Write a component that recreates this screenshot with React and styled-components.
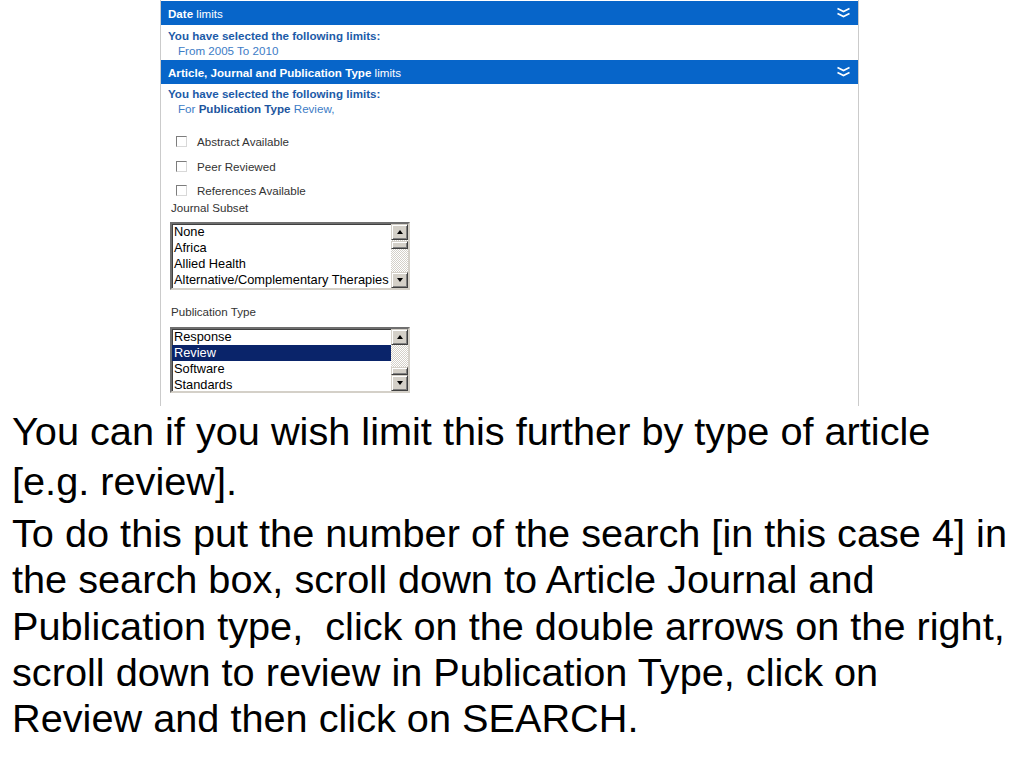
import styled, { createGlobalStyle } from "styled-components";

const Global = createGlobalStyle`
  html, body {
    margin: 0;
    padding: 0;
    background: #fff;
  }
`

const Page = styled.div`
  width: 1024px;
  height: 768px;
  overflow: hidden;
  background: #fff;
`

const Panel = styled.div`
  margin-left: 160px;
  width: 697px;
  border-left: 1px solid #cbcbcb;
  border-right: 1px solid #cbcbcb;
  padding: 1px 0 13px;
  font-family: "Liberation Sans", Arial, sans-serif;
  font-size: 11.6px;
`

const Header = styled.div`
  height: 24px;
  background: #0765c9;
  color: #fff;
  display: flex;
  align-items: center;
  justify-content: space-between;
  padding: 0 7px;
  b { font-weight: bold; }
`

const Body = styled.div`
  padding: ${p => p.$top}px 0 ${p => p.$bottom}px 7px;
`

const Line = styled.div`
  line-height: 15px;
  height: 15px;
  white-space: nowrap;
  color: ${p => (p.$strong ? "#1c5ba8" : "#3d7cc6")};
  font-weight: ${p => (p.$strong ? "bold" : "normal")};
  padding-left: ${p => p.$indent || 0}px;
  b { color: #1d559e; }
`

const CheckRow = styled.div`
  display: flex;
  align-items: center;
  height: 15px;
  margin-top: ${p => p.$gap}px;
  padding-left: 15px;
  color: #333;
`

const Box = styled.span`
  width: 9px;
  height: 9px;
  background: #fff;
  border: 1px solid;
  border-color: #7d7d7d #d8d8d8 #d8d8d8 #7d7d7d;
  margin-right: 10px;
`

const Label = styled.div`
  line-height: 15px;
  height: 15px;
  margin-top: ${p => p.$gap}px;
  padding-left: 10px;
  color: #333;
`

const ListBox = styled.div`
  display: flex;
  margin: ${p => p.$gap}px 0 0 9px;
  width: 236px;
  height: ${p => p.$h}px;
  border: 2px solid;
  border-color: #6f6f6f #d4d0c8 #d4d0c8 #6f6f6f;
  box-shadow: inset 1px 1px 0 #404040;
  background: #fff;
  font-family: "Liberation Sans", Arial, sans-serif;
  font-size: 12.8px;
`

const Rows = styled.div`
  flex: 1;
  overflow: hidden;
`

const Row = styled.div`
  height: 16px;
  line-height: 16px;
  padding-left: 2px;
  white-space: nowrap;
  color: ${p => (p.$sel ? "#fff" : "#000")};
  background: ${p => (p.$sel ? "#0a246a" : "transparent")};
`

const Scroll = styled.div`
  width: 17px;
  display: flex;
  flex-direction: column;
`

const Btn = styled.div`
  height: 14px;
  background: #d4d0c8;
  border: 1px solid;
  border-color: #d4d0c8 #404040 #404040 #d4d0c8;
  box-shadow: inset 1px 1px 0 #fff, inset -1px -1px 0 #808080;
  display: flex;
  align-items: center;
  justify-content: center;
  &::after {
    content: "";
    border-left: 3.5px solid transparent;
    border-right: 3.5px solid transparent;
    ${p => (p.$down ? "border-top: 4px solid #000;" : "border-bottom: 4px solid #000;")}
  }
`

const Track = styled.div`
  flex: 1;
  background: repeating-conic-gradient(#d4d0c8 0 25%, #fff 0 50%) 0 0 / 2px 2px;
`

const Thumb = styled.div`
  margin-top: ${p => p.$top}px;
  height: 6px;
  background: #d4d0c8;
  border: 1px solid;
  border-color: #d4d0c8 #404040 #404040 #d4d0c8;
  box-shadow: inset 1px 1px 0 #fff, inset -1px -1px 0 #808080;
`

const Text = styled.div`
  padding-left: 12px;
  font-family: "Liberation Sans", Arial, sans-serif;
  font-size: 39.7px;
  color: #000;
`

const Para = styled.div`
  margin-top: ${p => p.$gap}px;
  line-height: ${p => p.$lh}px;
  div { white-space: pre; }
`

const Chevrons = () => (
  <svg width="15" height="12" viewBox="0 0 15 12">
    <path d="M1.5 1.5 L7.5 4.5 L13.5 1.5 M1.5 6.5 L7.5 9.5 L13.5 6.5" fill="none" stroke="#fff" strokeWidth="1.6" />
  </svg>
)

const List = ({ items, sel, thumb, gap, h }) => (
  <ListBox $gap={gap} $h={h}>
    <Rows>
      {items.map((t, i) => (
        <Row key={t} $sel={i === sel}>{t}</Row>
      ))}
    </Rows>
    <Scroll>
      <Btn />
      <Track>
        <Thumb $top={thumb} />
      </Track>
      <Btn $down />
    </Scroll>
  </ListBox>
)

export default function App() {
  return (
    <Page>
      <Global />
      <Panel>
        <Header>
          <span><b>Date</b> limits</span>
          <Chevrons />
        </Header>
        <Body $top={3} $bottom={2}>
          <Line $strong>You have selected the following limits:</Line>
          <Line $indent={10}>From 2005 To 2010</Line>
        </Body>
        <Header>
          <span><b>Article, Journal and Publication Type</b> limits</span>
          <Chevrons />
        </Header>
        <Body $top={2} $bottom={0}>
          <Line $strong>You have selected the following limits:</Line>
          <Line $indent={10}>For <b>Publication Type</b> Review,</Line>
        </Body>
        <CheckRow $gap={18}><Box />Abstract Available</CheckRow>
        <CheckRow $gap={10}><Box />Peer Reviewed</CheckRow>
        <CheckRow $gap={9}><Box />References Available</CheckRow>
        <Label $gap={2}>Journal Subset</Label>
        <List
          gap={7}
          h={64}
          items={["None", "Africa", "Allied Health", "Alternative/Complementary Therapies"]}
          sel={-1}
          thumb={1}
        />
        <Label $gap={14}>Publication Type</Label>
        <List
          gap={8}
          h={62}
          items={["Response", "Review", "Software", "Standards"]}
          sel={1}
          thumb={22}
        />
      </Panel>
      <Text>
        <Para $gap={0} $lh={50}>
          <div>You can if you wish limit this further by type of article</div>
          <div>[e.g. review].</div>
        </Para>
        <Para $gap={4} $lh={46.25}>
          <div>To do this put the number of the search [in this case 4] in</div>
          <div>the search box, scroll down to Article Journal and</div>
          <div>Publication type,  click on the double arrows on the right,</div>
          <div>scroll down to review in Publication Type, click on</div>
          <div>Review and then click on SEARCH.</div>
        </Para>
      </Text>
    </Page>
  )
}
